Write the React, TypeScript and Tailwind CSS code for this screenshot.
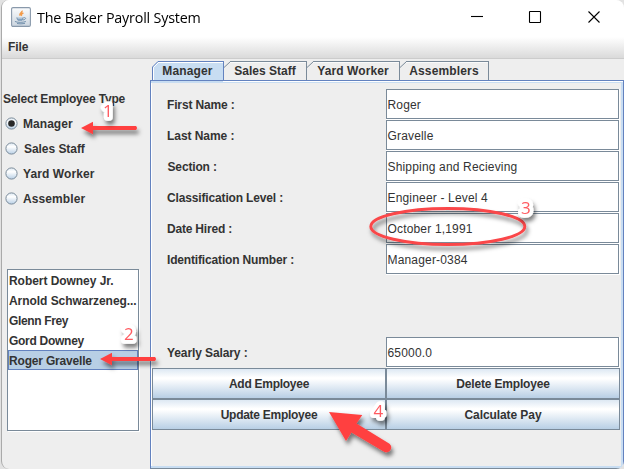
import React from "react";

const employeeTypes = [
  { name: "Manager", cls: "tracking-[0.05px]" },
  { name: "Sales Staff", cls: "tracking-[-0.05px] pl-px" },
  { name: "Yard Worker", cls: "tracking-[0.1px]" },
  { name: "Assembler", cls: "tracking-[0.1px]" },
];

const employees = [
  { name: "Robert Downey Jr.", cls: "tracking-[-0.05px]" },
  { name: "Arnold Schwarzeneg...", cls: "tracking-[-0.05px]" },
  { name: "Glenn Frey", cls: "tracking-[-0.35px]" },
  { name: "Gord Downey", cls: "tracking-[-0.28px]" },
  { name: "Roger Gravelle", cls: "tracking-[-0.18px]" },
];

const tabs = [
  { name: "Manager", width: "w-[72px]", cls: "tracking-[0.15px]" },
  { name: "Sales Staff", width: "w-[83px]", cls: "tracking-[0.02px]" },
  { name: "Yard Worker", width: "w-[93px]", cls: "tracking-[0.1px] pr-0.5" },
  { name: "Assemblers", width: "w-[89px]", cls: "tracking-[0.15px]" },
];

const fields = [
  { label: "First Name :", value: "Roger", cls: "tracking-[-0.15px]" },
  { label: "Last Name :", value: "Gravelle", cls: "tracking-[-0.05px]" },
  { label: "Section :", value: "Shipping and Recieving", cls: "tracking-[-0.15px] pl-[0.5px]" },
  { label: "Classification Level :", value: "Engineer - Level 4", cls: "tracking-[-0.15px]" },
  { label: "Date Hired :", value: "October 1,1991", cls: "tracking-[-0.2px]" },
  { label: "Identification Number :", value: "Manager-0384", cls: "tracking-[-0.16px]" },
  null,
  null,
  { label: "Yearly Salary :", value: "65000.0", cls: "tracking-[-0.1px]" },
];

const actions = [
  { name: "Add Employee", cls: "tracking-[-0.27px]" },
  { name: "Delete Employee", cls: "tracking-[-0.18px]" },
  { name: "Update Employee", cls: "tracking-[-0.27px]" },
  { name: "Calculate Pay", cls: "tracking-[-0.08px]" },
];

function JavaIcon() {
  return (
    <svg className="ml-[9px] h-5 w-5 shrink-0" viewBox="0 0 20 20" fill="none">
      <defs>
        <linearGradient id="iconBg" x1="0" y1="0" x2="0" y2="1">
          <stop offset="0" stopColor="#fbfcfd" />
          <stop offset="1" stopColor="#cbd5df" />
        </linearGradient>
      </defs>
      <rect x="0.6" y="0.6" width="18.8" height="18.8" rx="1.4" fill="url(#iconBg)" stroke="#8999ab" strokeWidth="1.1" />
      <path d="M11 3.600c.8 1.900-3.600 2.600-2 5.100M12.400 6c-2.200.9-2.600 1.700-1.700 2.900" stroke="#f39a48" strokeWidth="1.500" />
      <path d="M5.300 10.200c1.500.8 5.800.8 7.300 0-.2 2-1 3.200-1.800 3.600H7.200c-.8-.5-1.700-1.800-1.900-3.600z" fill="#7695b3" />
      <path d="M12.600 10.700c2.800-.5 2.700 1.700-.6 2.300M3.900 14.400c2 1.300 8.300 1.200 11 .1M6 16.500c2.500.5 5.500.4 8-.2" stroke="#7391ad" strokeWidth="1" />
      <path d="M6.600 11.700h4.700" stroke="#dbe7f1" strokeWidth=".7" />
    </svg>
  );
}

function TitleBar() {
  return (
    <header className="flex h-[37px] items-start bg-white pt-[7px]">
      <JavaIcon />
      <h1 className="ml-1.5 w-[170px] origin-left scale-x-[0.955] whitespace-nowrap font-['Open_Sans',sans-serif] text-[15px] font-normal leading-5 tracking-[-0.2px] text-black">
        The Baker Payroll System
      </h1>
      <svg className="ml-auto mr-[22px] h-5 w-[132px]" viewBox="0 0 132 20" fill="none" stroke="#000" strokeWidth="1.1">
        <path d="M1 9.500h12" />
        <rect x="59.500" y="4.500" width="11" height="11" rx=".5" />
        <path d="M118.500 4.500l11 11M129.500 4.500l-11 11" />
      </svg>
    </header>
  );
}

function Radio({ checked }: { checked: boolean }) {
  return (
    <svg className="h-[13px] w-[13px] shrink-0" viewBox="0 0 13 13">
      <defs>
        <linearGradient id="radioFill" x1="0" y1="0" x2="0" y2="1">
          <stop offset="0" stopColor="#dce8f2" />
          <stop offset=".35" stopColor="#fff" />
          <stop offset="1" stopColor="#b8cfe5" />
        </linearGradient>
      </defs>
      <circle cx="6.500" cy="6.500" r="5.600" fill="url(#radioFill)" stroke="#7a8a99" />
      {checked && <circle cx="6.500" cy="6.500" r="3.300" fill="#282828" />}
    </svg>
  );
}

function Sidebar() {
  return (
    <aside className="flex w-[148px] shrink-0 flex-col">
      <h2 className="mt-[33px] whitespace-nowrap pl-px leading-[14px] tracking-[-0.19px]">Select Employee Type</h2>
      <div className="mt-[5px] flex flex-col">
        {employeeTypes.map((type, i) => (
          <label key={type.name} className="flex h-[25px] items-center gap-[5px] pl-[3px]">
            <Radio checked={i === 0} />
            <span className={"pt-px " + type.cls}>{type.name}</span>
          </label>
        ))}
      </div>
      <ul className="ml-[5px] mt-[58px] h-[162px] w-[132px] border border-[#7a8a99] bg-white shadow-[1px_1px_0_white]">
        {employees.map((employee, i) => (
          <li
            key={employee.name}
            className={
              (i === 4
                ? "flex h-5 items-center overflow-hidden whitespace-nowrap border border-[#6382bf] bg-[#b8cfe5] pt-px "
                : "flex h-5 items-center overflow-hidden whitespace-nowrap pl-px pt-px ") + employee.cls
            }
          >
            {employee.name}
          </li>
        ))}
      </ul>
    </aside>
  );
}

function TabStrip() {
  return (
    <nav className="flex h-[19px] pl-[2px]">
      {tabs.map((tab, i) => (
        <div key={tab.name} className={"relative flex h-[19px] items-center justify-center pt-px " + tab.width}>
          <svg className="absolute inset-0 h-full w-full" viewBox="0 0 100 19" preserveAspectRatio="none">
            {i === 0 && <path d="M1 19V6L8 0H100V19z" fill="#c8ddf2" />}
          </svg>
          <svg className="absolute left-0 top-0 h-[19px] w-[7px]" viewBox="0 0 7 19" fill="none" stroke={i ? "#7a8a99" : "#6382bf"}>
            <path d={i ? "M0 6.500L6.500.5H7" : "M.5 19V6L6 .5H7"} />
            {i === 0 && <path d="M1.500 19V6.500L6.500 1.500" stroke="#fff" />}
          </svg>
          <i
            className={
              i
                ? "absolute left-1.5 right-0 top-0 h-full border-r border-t border-[#7a8a99] shadow-[inset_0_1px_0_#fafafa]"
                : "absolute left-1.5 right-0 top-0 h-full border-r border-t border-[#6382bf] shadow-[inset_0_1px_0_white]"
            }
          />
          <span className={"relative whitespace-nowrap pr-px " + tab.cls}>{tab.name}</span>
        </div>
      ))}
    </nav>
  );
}

function FieldRow({ label, value, cls }: { label: string; value: string; cls: string }) {
  return (
    <div className="flex h-[31px]">
      <div className="flex h-[30px] w-[234px] items-center whitespace-nowrap pl-[15px] pt-px">
        <label className={cls}>{label}</label>
      </div>
      <div className="h-[31px] w-[234px] bg-white pb-px pr-px">
        <div className="flex h-[30px] w-[233px] items-center border border-[#7a8a99] pl-[0.5px] pt-px font-normal tracking-[0.17px] shadow-[inset_1px_0_0_white]">
          {value}
        </div>
      </div>
    </div>
  );
}

function ManagerPanel() {
  return (
    <section className="flex h-[389px] flex-col border border-[#6382bf] border-b-[#7a8a99] bg-[#eee]">
      <div className="relative h-full border-b-2 border-r-2 border-t-2 border-[#c8ddf2] pl-px pt-[6px] shadow-[inset_1px_0_0_white]">
        <i className="absolute -top-[2px] left-[72px] -right-[2px] h-px bg-white" />
        <div className="w-[468px]">
          {fields.map((field, i) =>
            field ? (
              <FieldRow key={i} label={field.label} value={field.value} cls={field.cls} />
            ) : (
              <div key={i} className="h-[31px]" />
            )
          )}
          <div className="grid grid-cols-2">
            {actions.map((action) => (
              <button
                key={action.name}
                className={
                  "h-[31px] border border-[#7a8a99] bg-[linear-gradient(#dde8f3_0%,#fff_30%,#fff_34%,#b8cfe5_100%)] font-bold " +
                  action.cls
                }
              >
                {action.name}
              </button>
            ))}
          </div>
        </div>
      </div>
    </section>
  );
}

function Annotations() {
  return (
    <svg className="pointer-events-none absolute left-0 top-0 h-[469px] w-[624px]" viewBox="0 0 624 469">
      <defs>
        <filter id="shadow" x="-30%" y="-100%" width="170%" height="400%">
          <feDropShadow dx="2" dy="4" stdDeviation="2" floodColor="#000" floodOpacity=".5" />
        </filter>
      </defs>
      <g filter="url(#shadow)" fill="#ff4141" stroke="none">
        <path d="M81 128L93 121.700V125.900H136Q138 127.900 136 129.900H93V134.300z" />
        <path d="M100 359L112 352.700V356.900H155Q157 358.900 155 360.900H112V365.300z" />
        <path d="M329 412L362.300 415L356.500 423.500L389.500 443.800Q392.500 446.500 390.500 450Q388 453.500 384 451.700L351.500 432.500L346 441z" />
      </g>
      <ellipse cx="447.800" cy="226.500" rx="77" ry="18" fill="none" stroke="#fa4648" strokeWidth="2.900" filter="url(#shadow)" />
      <g
        filter="url(#shadow)"
        className="font-['Open_Sans',sans-serif] text-[17px] font-normal"
        fill="#ff5a60"
        stroke="#fff"
        strokeWidth="7.500"
        strokeLinejoin="round"
        paintOrder="stroke"
      >
        <text x="103" y="117">1</text>
        <text x="124" y="340">2</text>
        <text x="521" y="214">3</text>
        <text x="373.500" y="417">4</text>
      </g>
    </svg>
  );
}

export default function App() {
  return (
    <div className="relative h-[469px] w-[624px] overflow-hidden bg-[#e2e2e2] font-['Liberation_Sans',Arial,sans-serif] text-[12px] font-bold leading-[14px] text-[#333]">
      <div className="ml-px flex h-[469px] w-[623px] flex-col overflow-hidden rounded-[8px] border-l border-[#aaa] bg-[#eee]">
        <TitleBar />
        <div className="flex h-[22px] items-start border-b border-[#ccc] bg-linear-to-b from-white to-[#dadada] pl-1.5 pt-[3px] tracking-[-0.1px]">
          File
        </div>
        <main className="flex h-[410px]">
          <Sidebar />
          <div className="w-[474px] shrink-0 pt-0.5">
            <TabStrip />
            <ManagerPanel />
          </div>
        </main>
      </div>
      <Annotations />
    </div>
  );
}
